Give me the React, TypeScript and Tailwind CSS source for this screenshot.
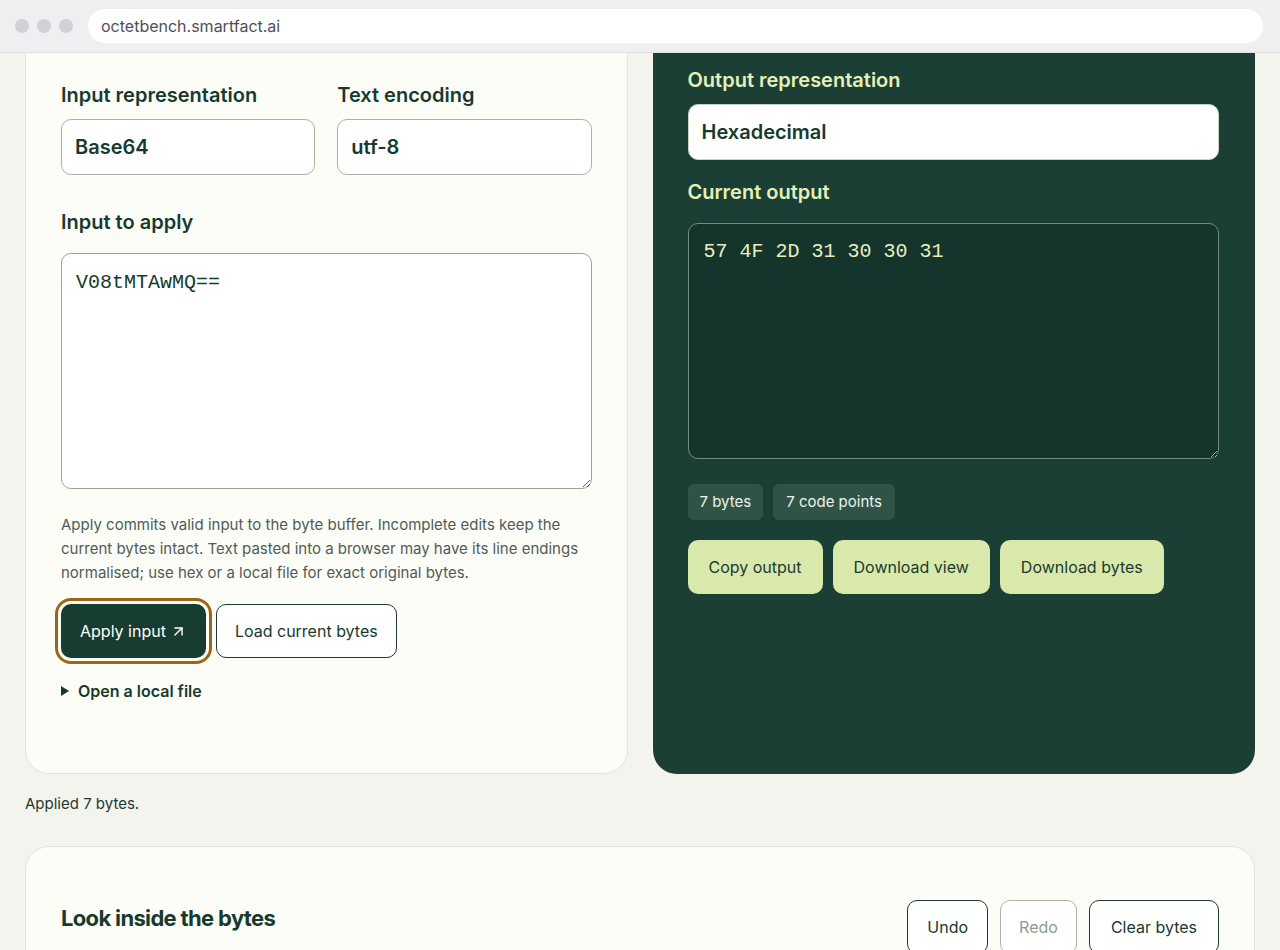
import React from 'react'
import { ArrowUpRight } from 'lucide-react'

const sans = { fontFamily: 'Inter, "Noto Sans", sans-serif' }

const Field: React.FC<{ value: string; light?: boolean }> = ({ value }) => (
  <div className="flex h-[56px] items-center rounded-[10px] border border-[#a8b3a6] bg-white px-[13px] text-[20px] font-semibold text-[#173a2f]">
    {value}
  </div>
)

const BrowserBar: React.FC = () => (
  <div className="flex h-[53px] items-center gap-[12px] border-b border-[#e2e2e6] bg-[#efeff2] pl-[15px] pr-[17px]">
    <div className="flex gap-[8px]">
      <span className="h-[14px] w-[14px] rounded-full bg-[#d0d0d7]" />
      <span className="h-[14px] w-[14px] rounded-full bg-[#d0d0d7]" />
      <span className="h-[14px] w-[14px] rounded-full bg-[#d0d0d7]" />
    </div>
    <div className="ml-[3px] flex h-[34px] flex-1 items-center rounded-full bg-white px-[13px] text-[16px] text-[#4f4f5c]">
      octetbench.smartfact.ai
    </div>
  </div>
)

export default function App() {
  return (
    <div className="h-[950px] overflow-hidden bg-[#f4f4ee]" style={sans}>
      <BrowserBar />
      <div className="h-[897px] overflow-hidden">
        {/* page is scrolled, top of the panels sits under the bar */}
        <div className="-mt-[33px] px-[25px]">
          <div className="grid grid-cols-2 gap-[25px]">
            <section className="rounded-[24px] border border-[#e3e4da] bg-[#fdfdf8] px-[35px] pt-[62px] pb-[70px]">
              <div className="grid grid-cols-2 gap-[22px]">
                <div>
                  <div className="mb-[12px] text-[20px] leading-[24px] font-semibold text-[#173a2f]">Input representation</div>
                  <Field value="Base64" />
                </div>
                <div>
                  <div className="mb-[12px] text-[20px] leading-[24px] font-semibold text-[#173a2f]">Text encoding</div>
                  <Field value="utf-8" />
                </div>
              </div>
              <div className="mt-[35px] mb-[19px] text-[20px] leading-[24px] font-semibold text-[#173a2f]">Input to apply</div>
              <textarea
                readOnly
                value="V08tMTAwMQ=="
                className="block h-[236px] w-full rounded-[10px] border border-[#9aa69b] bg-white px-[14px] py-[17px] text-[20px] leading-[24px] text-[#173a2f] outline-none"
                style={{ fontFamily: '"Liberation Mono", "Courier New", monospace' }}
              />
              <p className="mt-[24px] text-[15px] leading-[24px] text-[#4f5c55]">
                Apply commits valid input to the byte buffer. Incomplete edits keep the current bytes intact. Text pasted into a browser may have its line endings normalised; use hex or a local file for exact original bytes.
              </p>
              <div className="mt-[19px] flex gap-[10px]">
                <button className="flex h-[54px] items-center gap-[4px] rounded-[10px] bg-[#173d31] px-[19px] text-[16px] text-white outline-[3px] outline-offset-[3px] outline-[#9c6618] outline-solid">
                  Apply input <ArrowUpRight size={17} strokeWidth={2} />
                </button>
                <button className="h-[54px] rounded-[10px] border border-[#1f3a30] bg-white px-[18px] text-[16px] text-[#173a2f]">
                  Load current bytes
                </button>
              </div>
              <div className="mt-[21px] flex items-center gap-[9px] text-[16px] leading-[24px] font-semibold text-[#173a2f]">
                <svg width="8" height="10" viewBox="0 0 8 10"><path d="M0 0 L8 5 L0 10 Z" fill="#173a2f" /></svg>
                Open a local file
              </div>
            </section>

            <section className="rounded-[24px] bg-[#1b3f34] pl-[35px] pr-[36px] pt-[48px] pb-[40px]">
              <div className="mb-[12px] text-[20px] leading-[24px] font-semibold text-[#e3f0b9]">Output representation</div>
              <div className="flex h-[56px] items-center rounded-[10px] border border-[#c9d3c4] bg-white px-[13px] text-[20px] font-semibold text-[#173a2f]">
                Hexadecimal
              </div>
              <div className="mt-[20px] mb-[19px] text-[20px] leading-[24px] font-semibold text-[#e3f0b9]">Current output</div>
              <textarea
                readOnly
                value="57 4F 2D 31 30 30 31"
                className="block h-[236px] w-full rounded-[10px] border border-[#748e7b] bg-[#15352c] px-[15px] py-[16px] text-[20px] leading-[24px] text-[#e6f0bd] outline-none"
                style={{ fontFamily: '"Liberation Mono", "Courier New", monospace' }}
              />
              <div className="mt-[25px] flex gap-[10px]">
                <span className="flex h-[36px] items-center rounded-[6px] bg-[#2f5447] px-[12px] text-[15px] text-[#eef3ea]">7 bytes</span>
                <span className="flex h-[36px] items-center rounded-[6px] bg-[#2f5447] px-[13px] text-[15px] text-[#eef3ea]">7 code points</span>
              </div>
              <div className="mt-[20px] flex gap-[10px]">
                {['Copy output', 'Download view', 'Download bytes'].map((t) => (
                  <button key={t} className="h-[54px] rounded-[10px] bg-[#d8e9ab] px-[21px] text-[16px] text-[#1d3a30]">
                    {t}
                  </button>
                ))}
              </div>
            </section>
          </div>

          <div className="mt-[20px] text-[15px] leading-[20px] text-[#1d3a30]">Applied 7 bytes.</div>

          <section className="mt-[32px] flex items-start justify-between rounded-[24px] border border-[#e3e4da] bg-[#fdfdf8] px-[35px] pt-[53px] pb-[40px]">
            <h2 className="mt-[4px] text-[22px] leading-[28px] font-bold tracking-[-0.03em] text-[#173a2f]">Look inside the bytes</h2>
            <div className="flex gap-[12px]">
              <button className="h-[54px] rounded-[10px] border border-[#1f3a30] bg-white px-[19px] text-[16px] text-[#173a2f]">Undo</button>
              <button className="h-[54px] rounded-[10px] border border-[#a7b5ac] bg-white px-[18px] text-[16px] text-[#8c9c92]">Redo</button>
              <button className="h-[54px] rounded-[10px] border border-[#1f3a30] bg-white px-[21px] text-[16px] text-[#173a2f]">Clear bytes</button>
            </div>
          </section>
        </div>
      </div>
    </div>
  )
}
